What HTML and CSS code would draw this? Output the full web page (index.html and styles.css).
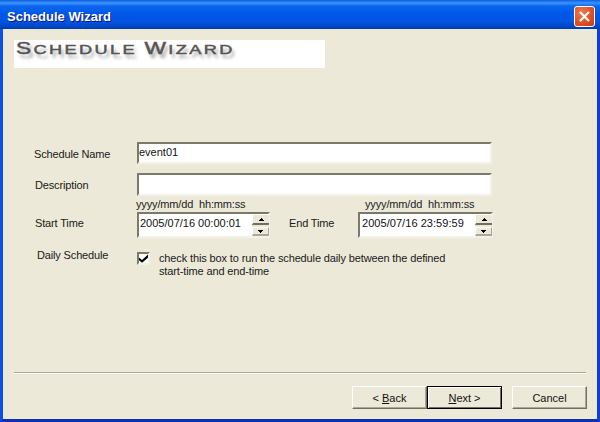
FILE: index.html
```html
<!DOCTYPE html>
<html lang="en">
<head>
<meta charset="utf-8">
<title>Schedule Wizard</title>
<link rel="stylesheet" href="styles.css">
</head>
<body>
<div class="window">
  <header class="titlebar">
    <span class="title">Schedule Wizard</span>
    <button class="close" aria-label="Close">
      <svg width="13" height="13" viewBox="0 0 13 13"><path d="M2 2l9 9M11 2l-9 9" stroke="#fff" stroke-width="2.2" fill="none"/></svg>
    </button>
  </header>
  <main class="client">
    <div class="banner"><span class="banner-text"><span class="cap">S</span>chedule <span class="cap">W</span>izard</span></div>
    <form class="form">
      <div class="row row-name">
        <span class="label">Schedule Name</span>
        <div class="sunken wide"><span class="value">event01</span></div>
      </div>
      <div class="row row-desc">
        <span class="label label-desc">Description</span>
        <div class="sunken wide tall"></div>
      </div>
      <div class="row row-time">
        <div class="label label-start">Start Time</div>
        <div class="time-field">
          <span class="hint">yyyy/mm/dd&nbsp; hh:mm:ss</span>
          <div class="sunken spin">
            <span class="value">2005/07/16 00:00:01</span>
            <div class="spin-btns">
              <span class="spin-btn"><svg width="5" height="3" viewBox="0 0 5 3"><path d="M2 0h1v1h1v1h1v1H0V2h1V1h1z"/></svg></span>
              <span class="spin-btn"><svg width="5" height="3" viewBox="0 0 5 3"><path d="M0 0h5v1H4v1H3v1H2V2H1V1H0z"/></svg></span>
            </div>
          </div>
        </div>
        <div class="label label-end">End Time</div>
        <div class="time-field time-field-end">
          <span class="hint">yyyy/mm/dd&nbsp; hh:mm:ss</span>
          <div class="sunken spin">
            <span class="value">2005/07/16 23:59:59</span>
            <div class="spin-btns">
              <span class="spin-btn"><svg width="5" height="3" viewBox="0 0 5 3"><path d="M2 0h1v1h1v1h1v1H0V2h1V1h1z"/></svg></span>
              <span class="spin-btn"><svg width="5" height="3" viewBox="0 0 5 3"><path d="M0 0h5v1H4v1H3v1H2V2H1V1H0z"/></svg></span>
            </div>
          </div>
        </div>
      </div>
      <div class="row row-daily">
        <span class="label label-daily">Daily Schedule</span>
        <span class="check"><svg width="9" height="9" viewBox="0 0 9 9"><path d="M0 3.5l3 2.6L9 0.5v3.2L3 8.8 0 6.2z" fill="#000"/></svg></span>
        <span class="check-text">check this box to run the schedule daily between the defined<br>start-time and end-time</span>
      </div>
    </form>
    <footer class="footer">
      <div class="divider"></div>
      <div class="buttons">
        <div class="btn-pair">
          <button type="button" class="btn">&lt; <u>B</u>ack</button>
          <button type="button" class="btn btn-default"><u>N</u>ext &gt;</button>
        </div>
        <button type="button" class="btn">Cancel</button>
      </div>
    </footer>
  </main>
</div>
</body>
</html>
```
FILE: styles.css
```css
* { box-sizing: border-box; }
html, body { margin: 0; padding: 0; }
body { width: 600px; height: 422px; overflow: hidden; font-family: "Liberation Sans", Arial, sans-serif; font-size: 11px; color: #1a1a1a; }
.window { width: 600px; height: 422px; display: flex; flex-direction: column; background: #0831d9; border-left: 3px solid #0a4fe6; border-right: 3px solid #0a3fd8; border-bottom: 3px solid #0a2fb8; }
.titlebar { height: 29px; margin: 0 -3px; padding: 3px 5px 0 7px; flex: none; display: flex; align-items: center; justify-content: space-between; background: linear-gradient(180deg, #0a5ce0 0, #3d95ff 3px, #0a66ee 6px, #0058e6 14px, #0055e0 22px, #0047c8 26px, #003cb0 29px); }
.title { font-family: "Liberation Sans", sans-serif; font-weight: bold; font-size: 13px; color: #fff; text-shadow: 1px 1px 0 #0f1089; }
.close { width: 21px; height: 21px; padding: 0; margin: 0; border: 1px solid #fff; border-radius: 3px; background: radial-gradient(circle at 35% 30%, #ee7a50, #dc4a20 65%, #c03a10); display: flex; align-items: center; justify-content: center; }
.client { flex: 1; min-height: 0; background: #ece9d8; display: flex; flex-direction: column; padding-top: 11px; }
.banner { width: 311px; height: 28px; margin-left: 11px; background: #fff; padding-left: 2px; flex: none; }
.banner-text { display: inline-block; white-space: nowrap; text-transform: uppercase; font-family: "Liberation Sans", sans-serif; font-size: 13.5px; line-height: 18px; letter-spacing: 1.8px; color: #555; -webkit-text-stroke: .5px #555; text-shadow: 2px 4px 3px rgba(0,0,0,.4); transform: scaleX(1.34); transform-origin: left top; }
.cap { font-size: 17px; }
.form { flex: none; padding-top: 74px; }
.row { display: flex; }
.label { flex: none; white-space: nowrap; letter-spacing: -.15px; }
.row-name { height: 22px; align-items: center; padding-left: 31px; }
.row-name .label { width: 103px; padding-top: 2px; }
.row-desc { height: 23px; margin-top: 9px; align-items: center; padding-left: 32px; }
.row-desc .label { width: 102px; }
.sunken { background: #fff; border: 2px solid; border-color: #7b7968 #f4f2e8 #f4f2e8 #7b7968; }
.wide { width: 355px; height: 22px; }
.tall { height: 23px; }
.value { display: block; padding: 1px 0 0 0; line-height: 14px; color: #111; white-space: nowrap; }
.row-time { height: 43px; }
.time-field { display: flex; flex-direction: column; width: 135px; }
.hint { height: 16px; padding-top: 2px; margin-left: -1px; line-height: 13px; color: #222; white-space: nowrap; letter-spacing: -.15px; }
.time-field-end .hint { margin-left: 7px; }
.spin { height: 26px; width: 133px; display: flex; justify-content: space-between; }
.time-field-end .spin { width: 135px; }
.spin .value { padding: 2px 0 0 1px; }
.time-field-end .spin .value { padding-left: 2px; letter-spacing: .05px; }
.spin-btns { width: 17px; height: 22px; margin-right: -1px; display: flex; flex-direction: column; justify-content: space-between; background: #ece9d8; }
.spin-btn { height: 11px; display: flex; align-items: center; justify-content: center; background: #ece9d8; border-top: 1px solid #fff; border-left: 1px solid #fff; border-bottom: 2px solid #716f64; }
.spin-btn + .spin-btn { height: 9px; border-bottom: 2px solid #aca899; border-right: 1px solid #aca899; }
.label-start { width: 102px; margin-left: 32px; padding-top: 21px; }
.label-end { width: 69px; margin-left: 17px; padding-top: 21px; }
.row-daily { margin-top: 9px; align-items: flex-start; padding-left: 34px; }
.label-daily { width: 100px; padding-top: 1px; }
.check { flex: none; width: 13px; height: 13px; margin-top: 4px; background: #fff; border: 2px solid; border-color: #7b7968 #f4f2e8 #f4f2e8 #7b7968; display: flex; align-items: center; justify-content: center; }
.check-text { margin-left: 9px; padding-top: 4px; line-height: 13px; letter-spacing: -.13px; }
.footer { margin-top: auto; flex: none; }
.divider { height: 2px; margin: 0 11px; background: #aca899; border-bottom: 1px solid #fff; }
.buttons { height: 45px; padding: 12px 10px 0 349px; display: flex; justify-content: space-between; }
.btn-pair { display: flex; }
.btn { width: 75px; height: 23px; padding: 0; background: #ece9d8; font: 11px "Liberation Sans", sans-serif; color: #111; border: 1px solid; border-color: #fff #716f64 #716f64 #fff; box-shadow: inset -1px -1px 0 #aca899; }
.btn-default { border: 1px solid #000; box-shadow: inset 1px 1px 0 #fff, inset -1px -1px 0 #716f64; }
```
